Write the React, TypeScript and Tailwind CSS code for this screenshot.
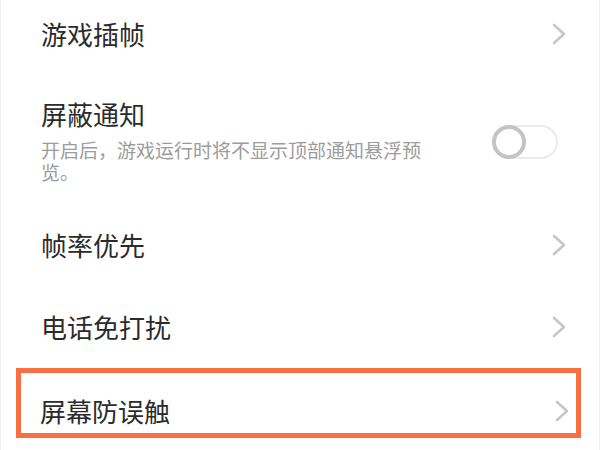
import React from 'react';

const font = { fontFamily: '"Noto Sans CJK SC", "Noto Sans", sans-serif' };

function Chevron() {
  return (
    <svg width="14" height="22" viewBox="0 0 14 22" fill="none" className="shrink-0">
      <polyline points="2,2 12,11 2,20" stroke="#c6c6c6" strokeWidth="2.6" strokeLinecap="round" strokeLinejoin="round" />
    </svg>
  );
}

function Toggle() {
  return (
    <div className="relative w-[66px] h-[34px] rounded-full border-2 border-[#ebebeb] bg-white shrink-0">
      <div className="absolute -left-[2px] -top-[2px] w-[34px] h-[34px] rounded-full border-[4px] border-[#c4c4c4] bg-white" />
    </div>
  );
}

function NavRow({ label }: { label: string }) {
  return (
    <div className="h-[82px] flex items-center justify-between pl-[40px] pr-[33px]">
      <span className="text-[26px] leading-[34px] text-[#2b2b2b]">{label}</span>
      <Chevron />
    </div>
  );
}

export default function App() {
  return (
    <div className="w-[600px] h-[450px] bg-white overflow-hidden border-x border-[#f0f0f0]" style={font}>
      {/* 游戏插帧 */}
      <div className="h-[68px] flex items-center justify-between pl-[40px] pr-[33px]">
        <span className="text-[26px] leading-[34px] text-[#2b2b2b]">游戏插帧</span>
        <Chevron />
      </div>

      {/* 屏蔽通知 */}
      <div className="flex items-center justify-between pl-[40px] pr-[41px] pt-[29px] pb-[21px]">
        <div className="flex flex-col">
          <span className="text-[26px] leading-[34px] text-[#2b2b2b]">屏蔽通知</span>
          <p className="mt-[8px] w-[385px] text-[19px] leading-[22px] text-[#9c9c9c]">
            开启后，游戏运行时将不显示顶部通知悬浮预览。
          </p>
        </div>
        <div className="pt-[4px]">
          <Toggle />
        </div>
      </div>

      <NavRow label="帧率优先" />
      <NavRow label="电话免打扰" />

      {/* highlighted row */}
      <div className="ml-[15px] w-[565px] h-[70px] border-[5px] border-[#f96f41] flex items-center justify-between pl-[19px] pr-[7px] pt-[16px]">
        <span className="text-[26px] leading-[34px] text-[#2b2b2b]">屏幕防误触</span>
        <Chevron />
      </div>
    </div>
  );
}
